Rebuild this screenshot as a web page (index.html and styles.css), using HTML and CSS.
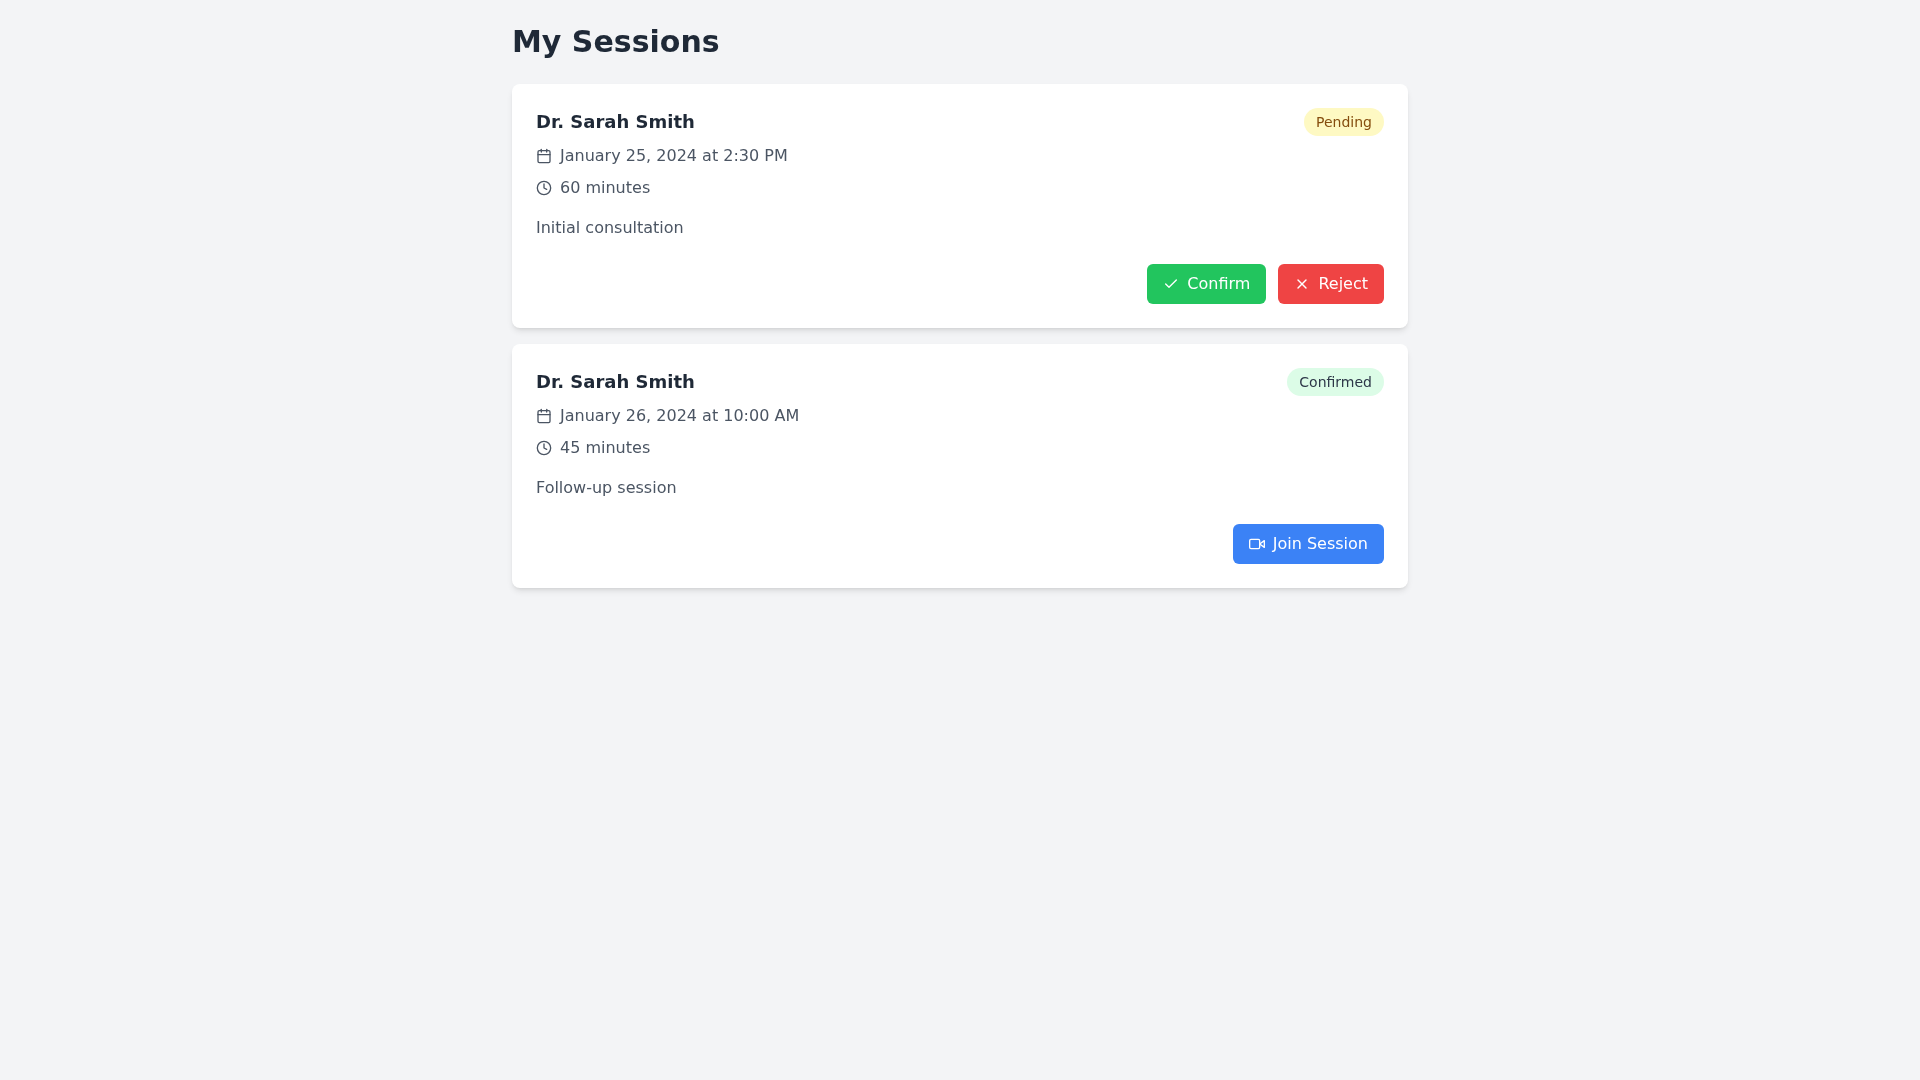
FILE: index.html
```html
<!DOCTYPE html>
<html lang="en">
<head>
<meta charset="utf-8">
<title>My Sessions</title>
<link rel="stylesheet" href="styles.css">
</head>
<body>
<main class="page">
  <h1 class="title">My Sessions</h1>
  <div class="list">
    <article class="card">
      <div class="head">
        <div class="info">
          <h2 class="name">Dr. Sarah Smith</h2>
          <div class="meta"><svg class="icon" viewBox="0 0 24 24"><path d="M8 2v4"/><path d="M16 2v4"/><rect x="3" y="4" width="18" height="18" rx="2"/><path d="M3 10h18"/></svg><span>January 25, 2024 at 2:30 PM</span></div>
          <div class="meta"><svg class="icon" viewBox="0 0 24 24"><circle cx="12" cy="12" r="10"/><polyline points="12 6 12 12 16 14"/></svg><span>60 minutes</span></div>
        </div>
        <span class="badge pending">Pending</span>
      </div>
      <p class="note">Initial consultation</p>
      <div class="actions">
        <button class="btn green"><svg class="icon" viewBox="0 0 24 24"><path d="M20 6 9 17l-5-5"/></svg>Confirm</button>
        <button class="btn red"><svg class="icon" viewBox="0 0 24 24"><path d="M18 6 6 18"/><path d="m6 6 12 12"/></svg>Reject</button>
      </div>
    </article>
    <article class="card">
      <div class="head">
        <div class="info">
          <h2 class="name">Dr. Sarah Smith</h2>
          <div class="meta"><svg class="icon" viewBox="0 0 24 24"><path d="M8 2v4"/><path d="M16 2v4"/><rect x="3" y="4" width="18" height="18" rx="2"/><path d="M3 10h18"/></svg><span>January 26, 2024 at 10:00 AM</span></div>
          <div class="meta"><svg class="icon" viewBox="0 0 24 24"><circle cx="12" cy="12" r="10"/><polyline points="12 6 12 12 16 14"/></svg><span>45 minutes</span></div>
        </div>
        <span class="badge confirmed">Confirmed</span>
      </div>
      <p class="note">Follow-up session</p>
      <div class="actions">
        <button class="btn blue"><svg class="icon" viewBox="0 0 24 24"><polygon points="23 7 16 12 23 17 23 7"/><rect x="1" y="5" width="15" height="14" rx="2"/></svg>Join Session</button>
      </div>
    </article>
  </div>
</main>
</body>
</html>
```
FILE: styles.css
```css
* { box-sizing: border-box; }
html, body { margin: 0; padding: 0; }
body {
  min-height: 100vh;
  background: #f3f4f6;
  font-family: "DejaVu Sans", sans-serif;
  color: #1f2937;
}
.page { width: 896px; margin: 0 auto; padding: 24px 0; will-change: transform; }
.title { margin: 0 0 24px; font-size: 30px; line-height: 36px; font-weight: 700; color: #1f2937; }
.list { display: flex; flex-direction: column; gap: 16px; }
.card {
  background: #fff;
  border-radius: 8px;
  padding: 24px;
  box-shadow: 0 4px 6px -1px rgba(0,0,0,.1), 0 2px 4px -2px rgba(0,0,0,.1);
}
.head { display: flex; justify-content: space-between; align-items: flex-start; }
.info { display: flex; flex-direction: column; }
.name { margin: 0 0 8px; font-size: 18px; line-height: 28px; font-weight: 700; color: #1f2937; }
.meta { display: flex; align-items: center; gap: 8px; margin-bottom: 8px; font-size: 16px; line-height: 24px; color: #4b5563; }
.meta:last-child { margin-bottom: 0; }
.icon { width: 16px; height: 16px; flex: none; fill: none; stroke: currentColor; stroke-width: 2; stroke-linecap: round; stroke-linejoin: round; }
.badge { padding: 4px 12px; border-radius: 9999px; font-size: 14px; line-height: 20px; }
.pending { background: #fef9c3; color: #854d0e; }
.confirmed { background: #dcfce7; color: #2d3748; }
.note { margin: 16px 0 0; font-size: 16px; line-height: 24px; color: #4b5563; }
.actions { display: flex; justify-content: flex-end; gap: 12px; margin-top: 24px; }
.btn {
  display: flex; align-items: center; gap: 8px;
  height: 40px; padding: 0 16px; border: 0; border-radius: 6px;
  font-family: inherit; font-size: 16px; line-height: 24px; color: #fff;
}
.green { background: #22c55e; }
.red { background: #ef4444; }
.blue { background: #3b82f6; }
```
